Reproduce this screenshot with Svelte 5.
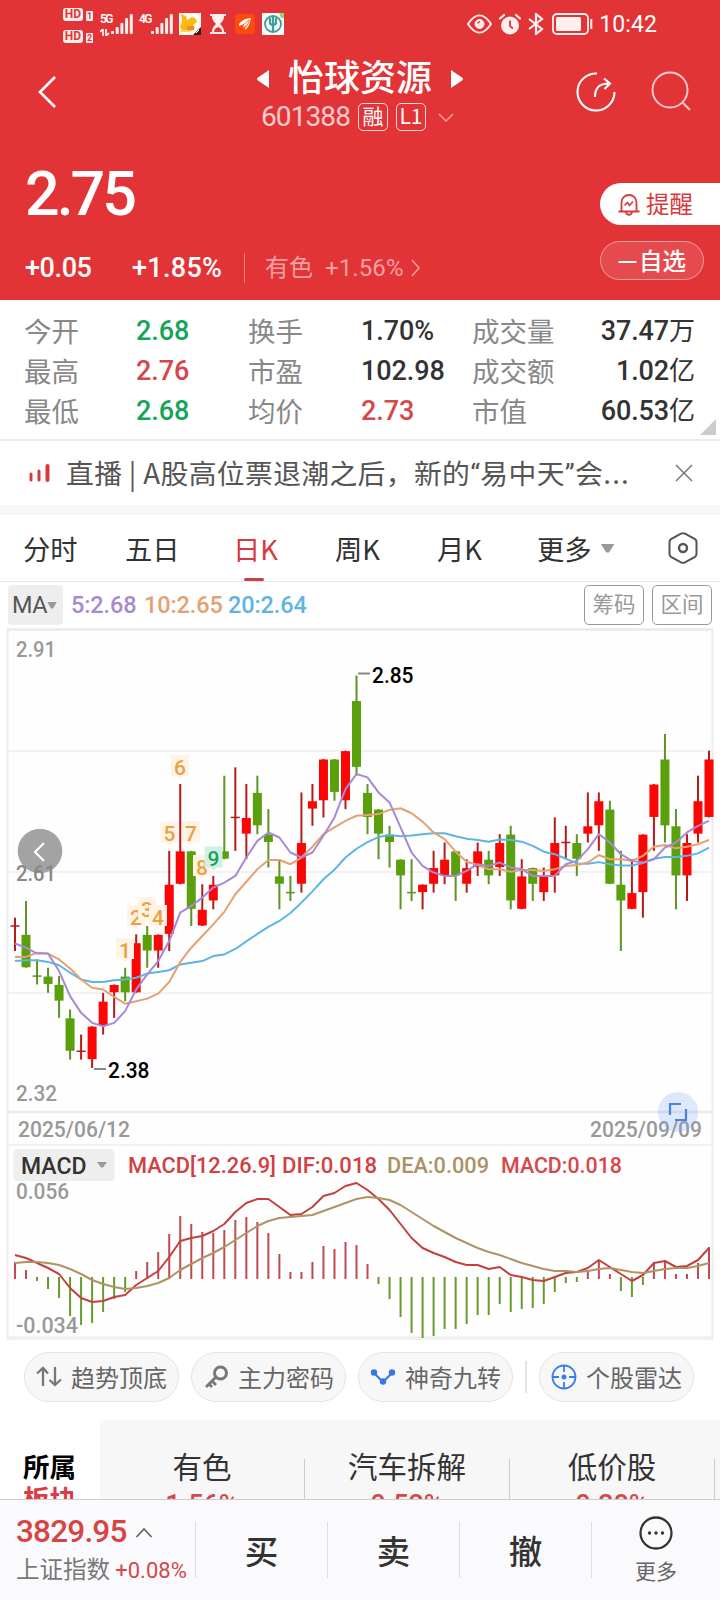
<script lang="ts">
	type Candle = [dir: 'u' | 'd', top: number, bottom: number, high: number, low: number];

	const statusBars = [3, 7, 11, 16, 20];

	const stats = [
		['今开', '2.68', 'down', '换手', '1.70%', '', '成交量', '37.47', '万'],
		['最高', '2.76', 'up', '市盈', '102.98', '', '成交额', '1.02', '亿'],
		['最低', '2.68', 'down', '均价', '2.73', 'up', '市值', '60.53', '亿'],
	];

	const tabs = ['分时', '五日', '日K', '周K', '月K'];
	let activeTab = $state('日K');

	// prices in cents
	const candles: Candle[] = [
		['u', 255, 255, 256, 252],
		['d', 254, 250, 258, 250],
		['d', 249, 249, 251, 248],
		['d', 249, 248, 250, 247],
		['d', 248, 246, 249, 244],
		['d', 244, 240, 245, 239],
		['u', 240, 240, 242, 239],
		['u', 243, 239, 243, 238],
		['u', 246, 243, 247, 242],
		['u', 248, 247, 248, 244],
		['d', 249, 247, 250, 246],
		['u', 253, 247, 254, 247],
		['d', 254, 252, 255, 250],
		['u', 254, 252, 254, 250],
		['u', 260, 254, 264, 252],
		['u', 264, 260, 272, 260],
		['d', 264, 257, 264, 255],
		['u', 257, 255, 260, 255],
		['u', 260, 258, 261, 257],
		['d', 264, 263, 273, 263],
		['u', 268, 268, 274, 264],
		['u', 268, 266, 272, 263],
		['d', 271, 267, 273, 266],
		['d', 266, 265, 269, 262],
		['d', 261, 260, 263, 257],
		['d', 259, 259, 261, 258],
		['u', 265, 260, 271, 259],
		['u', 270, 269, 272, 267],
		['u', 275, 270, 275, 268],
		['d', 275, 271, 275, 270],
		['u', 276, 270, 276, 269],
		['d', 282, 274, 285, 273],
		['d', 271, 268, 272, 266],
		['d', 269, 266, 269, 263],
		['d', 266, 265, 267, 262],
		['d', 263, 261, 263, 257],
		['d', 259, 259, 263, 258],
		['u', 260, 259, 260, 257],
		['u', 262, 260, 264, 259],
		['u', 263, 261, 265, 260],
		['d', 264, 261, 264, 258],
		['u', 262, 260, 263, 259],
		['u', 264, 262, 265, 261],
		['d', 263, 261, 264, 260],
		['u', 265, 262, 266, 261],
		['d', 266, 258, 267, 257],
		['u', 261, 257, 263, 257],
		['d', 262, 260, 262, 258],
		['u', 261, 259, 262, 258],
		['u', 265, 261, 268, 259],
		['u', 265, 265, 267, 263],
		['d', 265, 263, 266, 261],
		['u', 267, 266, 271, 265],
		['u', 270, 267, 271, 264],
		['d', 269, 260, 270, 260],
		['d', 260, 258, 264, 252],
		['u', 259, 257, 263, 257],
		['u', 266, 259, 266, 256],
		['u', 272, 268, 272, 264],
		['d', 275, 267, 278, 265],
		['d', 267, 261, 269, 257],
		['u', 265, 261, 266, 258],
		['u', 270, 266, 273, 265],
		['u', 275, 268, 276, 268],
	];

	// averages for the first days, before the window is full
	const seed5 = [252.9, 252.4, 251.7, 251.7];
	const seed10 = [251.3, 251.3, 251.8, 251.7, 251, 249.9, 248.6, 247.6, 247.4];
	const seed20 = [
		250.8, 250.9, 250.9, 250.7, 250.3, 249.4, 248.6, 248.3, 248.3, 248.5, 248.6, 248.8, 249.3,
		249.5, 249.7, 250.4, 250.6, 250.8, 251.4,
	];

	const macd = [
		16, 8, -3, -11, -20, -38, -47, -45, -34, -21, -14, 7, 16, 26, 44, 62, 54, 46, 45, 48, 58, 61,
		56, 45, 24, 6, 6, 16, 32, 29, 36, 33, 14, -6, -21, -39, -55, -60, -58, -51, -51, -46, -37, -37,
		-26, -34, -31, -30, -26, -14, -5, -4, 8, 18, 4, -13, -19, -7, 16, 18, 4, 4, 15, 31,
	];
	const dif = [
		23, 20, 15, 10, 4, -10, -20, -24, -23, -19, -17, -7, 0, 7, 21, 37, 40, 42, 47, 54, 66, 75, 79,
		79, 71, 63, 64, 71, 82, 85, 92, 95, 88, 79, 68, 54, 40, 30, 25, 21, 16, 13, 13, 9, 11, 3, 1, -2,
		-3, 1, 5, 6, 10, 18, 11, 4, -3, 3, 15, 17, 11, 12, 18, 30,
	];
	const dea = [
		15, 16, 16, 15, 13, 9, 4, -2, -6, -9, -11, -10, -8, -5, 0, 8, 14, 20, 25, 31, 38, 45, 52, 57,
		60, 61, 62, 63, 67, 71, 75, 79, 81, 80, 78, 73, 66, 59, 52, 46, 40, 35, 30, 26, 23, 19, 15, 12,
		9, 7, 7, 6, 7, 9, 10, 8, 6, 5, 7, 9, 10, 10, 12, 15,
	];

	const turns = [
		[125, 950],
		[136, 917],
		[147, 909],
		[158, 917],
		[169.5, 833.5],
		[180, 767],
		[191, 833],
		[202, 867],
		[213.5, 858.5],
	];

	const x = (i: number) => 15 + i * 11.016;
	const y = (p: number) => 675.5 + (285 - p) * 8.35;
	const zero = 1278;

	const closes = candles.map(([dir, top, bottom]) => (dir === 'u' ? top : bottom));

	function average(n: number, seed: number[]) {
		return closes.map((_, i) =>
			i < n - 1 ? seed[i] : closes.slice(i - n + 1, i + 1).reduce((a, b) => a + b, 0) / n,
		);
	}

	const pricePoints = (values: number[]) => values.map((v, i) => `${x(i)},${y(v)}`).join(' ');
	const macdPoints = (values: number[]) => values.map((v, i) => `${x(i)},${zero - v}`).join(' ');

	const sectors = [
		['有色', '1.56%'],
		['汽车拆解', '0.52%'],
		['低价股', '0.38%'],
	];
</script>

{#snippet signal()}
	<svg width="23" height="20" viewBox="0 0 23 20">
		{#each statusBars as h, i}
			<rect x={i * 4.7} y={20 - h} width="3" height={h} rx="1" fill="#fff" opacity=".92" />
		{/each}
	</svg>
{/snippet}

{#snippet label(text, lx, ly, size, width, fill)}
	<text
		x={lx}
		y={ly}
		{fill}
		font-size={size}
		textLength={width}
		lengthAdjust="spacingAndGlyphs">{text}</text
	>
{/snippet}

<main class="page">
	<header class="header">
		<div class="status">
			<div class="sims">
				<span class="sim"><b>HD</b><i>1</i></span>
				<span class="sim"><b>HD</b><i>2</i></span>
			</div>
			<div class="network">
				<span class="generation">5G</span>
				<svg class="transfer" width="10" height="7" viewBox="0 0 10 7">
					<path d="M0 3 3 0V7M6 0V7L9 4" fill="none" stroke="#fff" stroke-width="1.6" />
				</svg>
			</div>
			{@render signal()}
			<div class="network second"><span class="generation">4G</span></div>
			{@render signal()}
			<svg class="app-icon" width="22" height="22" viewBox="0 0 22 22">
				<rect width="22" height="22" fill="#fffdf0" />
				<path d="M2 1l5 2 1 4 5-3 4 2 1 3-4 3 2 3-4 3H3L1 14l2-6z" fill="#fdb913" />
				<path d="M8 13h7v4H8z" fill="#f58a1f" />
				<path d="M1 17h8l2 2H2z" fill="#ffd45c" />
				<path d="m14 22 8-8v8z" fill="#3a1712" />
				<path d="m17 20 3-3" stroke="#fff" />
			</svg>
			<svg class="hourglass" width="16" height="20" viewBox="0 0 16 20">
				<path d="M0 0h16v2h-2c0 4-2 6-4 8 2 2 4 4 4 8h2v2H0v-2h2c0-4 2-6 4-8C4 8 2 6 2 2H0z" fill="#fff0f0" />
				<path d="M4 18c0-3 2-4 4-5 2 1 4 2 4 5z" fill="#e23437" />
			</svg>
			<svg class="orange" width="20" height="20" viewBox="0 0 20 20">
				<rect width="20" height="20" rx="4" fill="#ff4a0a" />
				<path d="M4 10C7 6 11 4 16 4c-1 5-2 9-6 12l1-5-3 3 1-4-5 2z" fill="#fff" />
				<path d="m8 11 6-5M11 13l4-7" stroke="#ff4a0a" stroke-width=".8" />
			</svg>
			<svg class="bank" width="22" height="22" viewBox="0 0 22 22">
				<rect width="22" height="22" fill="#f4fbfa" />
				<circle cx="11" cy="11" r="8" fill="none" stroke="#3f9d9a" stroke-width="1.8" />
				<path d="M8 5v5.500q3 3 6 0V5M11 4v15" fill="none" stroke="#3f9d9a" stroke-width="2.2" />
				<path d="M17 0h5v5h-3z" fill="#9bd36a" />
			</svg>
			<div class="status-right">
				<svg width="25" height="20" viewBox="0 0 26 20" fill="none" stroke="#fff0f0">
					<path d="M1 10c4-6 8-9 12-9s8 3 12 9c-4 6-8 9-12 9S5 16 1 10z" stroke-width="2" />
					<circle cx="13" cy="10" r="4.6" fill="#fff0f0" />
					<path d="M11 9.5 13.4 7" stroke="#e23437" stroke-width="1.4" />
				</svg>
				<svg width="22" height="22" viewBox="0 0 22 22">
					<circle cx="11" cy="12.5" r="9" fill="#fff0f0" />
					<path d="M1 5.5 5 2M21 5.5 17 2" stroke="#fff0f0" stroke-width="2.2" stroke-linecap="round" />
					<path d="M11 7.5V13l3 2.6" fill="none" stroke="#e23437" stroke-width="1.8" />
				</svg>
				<svg width="18" height="22" viewBox="0 0 18 22">
					<path d="M2 6l13 10-6 5V1l6 5L2 16" fill="none" stroke="#fff0f0" stroke-width="2.2" />
				</svg>
				<svg width="41" height="22" viewBox="0 0 41 22">
					<rect x="1" y="1" width="35" height="20" rx="4" fill="none" stroke="#fff0f0" stroke-width="1.8" />
					<rect x="4" y="4" width="25" height="14" rx="1.5" fill="#fff0f0" />
					<path d="M39.3 6v10" stroke="#fff0f0" stroke-width="2" />
				</svg>
				<span class="clock">10:42</span>
			</div>
		</div>

		<div class="titlebar">
			<svg class="back" width="22" height="34" viewBox="0 0 22 34">
				<path d="M19 2 4 17l15 15" fill="none" stroke="#fff" stroke-width="2.6" />
			</svg>
			<div class="title">
				<h1>
					<svg width="12" height="18" viewBox="0 0 12 18">
						<path d="M12 0v18L1 10.5q-2-1.500 0-3z" fill="#fff" />
					</svg>
					<span>怡球资源</span>
					<svg width="12" height="18" viewBox="0 0 12 18">
						<path d="M0 0v18l11-7.500q2-1.500 0-3z" fill="#fff" />
					</svg>
				</h1>
				<div class="code">
					<span class="code-number">601388</span>
					<span class="tag">融</span>
					<span class="tag">L1</span>
					<svg width="16" height="9" viewBox="0 0 16 9">
						<path d="m1 1 7 7 7-7" fill="none" stroke="#f0a0a1" stroke-width="1.5" />
					</svg>
				</div>
			</div>
			<div class="tools">
				<svg width="42" height="42" viewBox="0 0 42 42" fill="none" stroke="#fff" stroke-width="2.1">
					<path d="M22 2.500A18.500 18.500 0 1 0 39.500 21" />
					<path d="M20 26c0-9 4-13.500 14-13.500M29 7.500l6 5-5.500 5.500" />
				</svg>
				<svg width="42" height="42" viewBox="0 0 42 42" fill="none" stroke="#f8cccd" stroke-width="1.9">
					<circle cx="20" cy="19" r="17.500" />
					<path d="m33 32 7 7" />
				</svg>
			</div>
		</div>

		<div class="quote">
			<div class="quote-main">
				<div class="price">2.75</div>
				<div class="change">
					<span class="amount">+0.05</span>
					<span class="percent">+1.85%</span>
					<span class="sector">有色</span>
					<span class="sector-change">+1.56%</span>
					<svg width="10" height="18" viewBox="0 0 10 18">
						<path d="m1 1 7 8-7 8" fill="none" stroke="#f1a0a2" stroke-width="1.5" />
					</svg>
				</div>
			</div>
			<div class="actions">
				<button class="remind">
					<svg width="22" height="23" viewBox="0 0 22 23" fill="none" stroke="#d8393c" stroke-width="1.8">
						<path d="M3.500 18V9.500a7.500 7.500 0 0 1 15 0V18M.5 18.500h21M8 19.500c1 3 5 3 6 0" />
						<path d="m6.500 12.500 3-3 2 3 3.500-4" stroke-width="1.500" />
					</svg>
					<span>提醒</span>
				</button>
				<button class="watch"><span class="minus">一</span>自选</button>
			</div>
		</div>
	</header>

	<section class="stats">
		{#each stats as [a, av, at, b, bv, bt, c, cv, unit]}
			<span class="name">{a}</span>
			<span class={['value', at]}>{av}</span>
			<span class="name">{b}</span>
			<span class={['value', bt]}>{bv}</span>
			<span class="name">{c}</span>
			<span class="value end">{cv}<em>{unit}</em></span>
		{/each}
		<span class="corner"></span>
	</section>

	<section class="news">
		<svg width="21" height="18" viewBox="0 0 21 18" stroke="#d8393c" stroke-linecap="round">
			<path d="M2 10v6" stroke-width="3" />
			<path d="M10 7v9" stroke-width="3" />
			<path d="M18.500 2v14" stroke-width="4" />
		</svg>
		<p>直播 | A股高位票退潮之后，新的<q>易中天</q>会<span class="dots">...</span></p>
		<svg width="18" height="18" viewBox="0 0 18 18">
			<path d="m1 1 16 16M17 1 1 17" stroke="#777" stroke-width="1.500" />
		</svg>
	</section>

	<nav class="tabs">
		{#each tabs as tab}
			<button class={['tab', { active: tab === activeTab }]} onclick={() => (activeTab = tab)}>
				{tab}
			</button>
		{/each}
		<button class="tab more">更多<i class="caret"></i></button>
		<svg class="settings" width="30" height="32" viewBox="0 0 30 32" fill="none" stroke="#555" stroke-width="2">
			<path d="M13 1.700q2-1 4 0l10 5.500q1.500 1 1.500 3v11.600q0 2-1.500 3l-10 5.500q-2 1-4 0l-10-5.500q-1.500-1-1.500-3V10.200q0-2 1.500-3z" />
			<circle cx="15" cy="16" r="4" stroke-width="2.400" />
		</svg>
	</nav>

	<div class="indicator">
		<button class="ma">MA<i class="caret small"></i></button>
		<span class="ma5">5:2.68</span>
		<span class="ma10">10:2.65</span>
		<span class="ma20">20:2.64</span>
		<button class="outlined">筹码</button>
		<button class="outlined">区间</button>
	</div>

	<svg class="chart" width="720" height="712" viewBox="0 628 720 712">
		<rect x="7.500" y="629.500" width="705" height="708" fill="#fefefe" stroke="#ebebeb" stroke-width="2" />
		<path d="M7 629.500h706M7 1112h706" stroke="#ebebeb" stroke-width="2.500" />
		<path d="M8 751h705M8 872h705M8 993h705M8 1145h705" stroke="#f2f2f2" stroke-width="2" />
		<path d="M7 1339.500h707" stroke="#eee" />

		<circle cx="40" cy="851" r="22.300" fill="#a3a3a3" />
		<path d="m44 843-9 9 9 9" fill="none" stroke="#fff" stroke-width="2.200" />

		{@render label('2.91', 16, 657, 22, 40, '#999')}
		{@render label('2.61', 16, 881, 22, 40, '#888')}
		{@render label('2.32', 16, 1101, 22, 41, '#999')}

		{#each candles as [dir, top, bottom, high, low], i}
			<g class={dir}>
				<path class="wick" d="M{x(i)} {y(high)}V{y(low)}" />
				{#if top === bottom}
					<path class="flat" d="M{x(i) - 4.500} {y(top)}h9" />
				{:else}
					<rect x={x(i) - 4.500} y={y(top) + 0.500} width="9" height={y(bottom) - y(top) - 1} />
				{/if}
			</g>
		{/each}

		{#each turns as [tx, ty], i}
			<g class={['turn', { last: i === 8 }]}>
				<path d="M{tx - 9} {ty - 12}h18v21h-6l-3 3-3-3h-6z" />
				<text x={tx} y={ty + 7.500}>{i + 1}</text>
			</g>
		{/each}

		<g class="lines">
			<polyline points={pricePoints(average(20, seed20))} stroke="#5eb5e0" />
			<polyline points={pricePoints(average(10, seed10))} stroke="#e5a171" />
			<polyline points={pricePoints(average(5, seed5))} stroke="#a78ad2" />
		</g>

		<path d="M358 673.500h12M94 1069h12" stroke="#888" stroke-width="2" />
		{@render label('2.85', 372, 682.500, 22, 41.500, '#000')}
		{@render label('2.38', 108, 1077.500, 22, 41.500, '#000')}

		{@render label('2025/06/12', 18, 1136.500, 22, 112, '#999')}
		{@render label('2025/09/09', 590, 1136.500, 22, 112, '#999')}
		<circle cx="678" cy="1112" r="20" fill="#6a9bf5" opacity=".22" />
		<path d="M670 1115v-11h11M675 1120h11v-11" fill="none" stroke="#4a83dc" stroke-width="2.200" />

		<rect x="13.500" y="1149" width="101" height="32" rx="4" fill="#eee" />
		{@render label('MACD', 21, 1173.500, 23, 65.500, '#333')}
		<path d="M97 1162h10l-4 5.500h-2z" fill="#999" />
		{@render label('MACD[12.26.9]', 128, 1173, 22, 148, '#cf4144')}
		{@render label('DIF:0.018', 282, 1173, 22, 95, '#cf4144')}
		{@render label('DEA:0.009', 387, 1173, 22, 102, '#ab9164')}
		{@render label('MACD:0.018', 501, 1173, 22, 121, '#d8474b')}
		{@render label('0.056', 16, 1199, 22, 53, '#999')}

		{#each macd as value, i}
			<path
				d="M{x(i)} {value > 0 ? zero + 1 : zero - 1}V{zero - value}"
				stroke={value > 0 ? '#bf4a50' : '#679a2c'}
				stroke-width="2"
			/>
		{/each}
		<g class="lines">
			<polyline points={macdPoints(dif)} stroke="#c2413f" />
			<polyline points={macdPoints(dea)} stroke="#b09365" />
		</g>
		{@render label('-0.034', 16, 1333, 22, 62, '#999')}
	</svg>

	<section class="shortcuts">
		<button>
			<svg width="26" height="22" viewBox="0 0 26 22" fill="none" stroke="#777" stroke-width="2.3">
				<path d="M7 20V2M1 7.500 7 2l5 5.500M19 1v18M13.500 14l5.500 5 6-5.500" />
			</svg>
			<span>趋势顶底</span>
		</button>
		<button>
			<svg width="26" height="24" viewBox="0 0 26 24" fill="none" stroke="#777">
				<circle cx="17.500" cy="8" r="6" stroke-width="3" />
				<path d="M13 12 3 22M9 16l4 4M5.500 18.500l3.500 3.500" stroke-width="2.800" />
			</svg>
			<span>主力密码</span>
		</button>
		<button>
			<svg width="26" height="20" viewBox="0 0 26 20" fill="#3478e8">
				<path d="m4 6 9 9 9-9" fill="none" stroke="#3478e8" stroke-width="2" />
				<circle cx="4" cy="5.500" r="3.200" />
				<circle cx="22" cy="5.500" r="3.200" />
				<circle cx="13" cy="14.500" r="3.200" />
			</svg>
			<span>神奇九转</span>
		</button>
		<i class="divider"></i>
		<button>
			<svg width="26" height="26" viewBox="0 0 26 26" fill="none" stroke="#3b7de8" stroke-width="1.800">
				<circle cx="13" cy="13" r="11.500" />
				<path d="M13 2v6M13 18v6M2 13h6M18 13h6" />
				<circle cx="13" cy="13" r="1.600" fill="#3b7de8" />
			</svg>
			<span>个股雷达</span>
		</button>
	</section>

	<section class="sectors">
		<div class="sectors-title"><b>所属</b><b class="second">板块</b></div>
		<div class="sector-list">
			{#each sectors as [name, change]}
				<div class="sector-cell">
					<span>{name}</span>
					<span class="sector-percent">{change}</span>
				</div>
			{/each}
		</div>
	</section>

	<footer class="bottom">
		<div class="index">
			<div class="index-value">
				3829.95
				<svg width="18" height="11" viewBox="0 0 18 11">
					<path d="m1.500 10 7.500-8 7.500 8" fill="none" stroke="#666" stroke-width="1.800" />
				</svg>
			</div>
			<div class="index-name">上证指数 <span>+0.08%</span></div>
		</div>
		<button class="trade">买</button>
		<button class="trade">卖</button>
		<button class="trade">撤</button>
		<button class="others">
			<svg width="36" height="36" viewBox="0 0 36 36" fill="#333">
				<circle cx="18" cy="18" r="15.500" fill="none" stroke="#333" stroke-width="2.300" />
				<circle cx="11.500" cy="18" r="1.700" />
				<circle cx="18" cy="18" r="1.700" />
				<circle cx="24.500" cy="18" r="1.700" />
			</svg>
			更多
		</button>
	</footer>
</main>

<style>
	:global(body) {
		background: #fff;
	}

	.page {
		--red: #d5474a;
		--digits: Roboto, 'Noto Sans CJK SC', sans-serif;
		display: flex;
		flex-direction: column;
		width: 720px;
		height: 1600px;
		overflow: hidden;
		background: #fff;
		color: #333;
		font-family: 'Noto Sans CJK SC', sans-serif;
		white-space: nowrap;
	}

	svg {
		display: block;
		flex: none;
	}

	button {
		margin: 0;
		padding: 0;
		border: 0;
		background: none;
		color: inherit;
		font: inherit;
	}

	/* Header */
	.header {
		height: 300px;
		background: #e23437;
		color: #fff;
	}

	.status {
		display: flex;
		align-items: center;
		height: 48px;
		padding: 0 63px;
		font-family: var(--digits);
	}

	.sims {
		display: flex;
		flex-direction: column;
		gap: 9px;
		margin: 2px 7px 0 0;
	}

	.sim {
		display: flex;
		align-items: flex-end;
		gap: 3px;
		height: 13px;
		width: 30px;
	}

	.sim b,
	.sim i {
		border-radius: 3px;
		background: #fff0f0;
		color: #e23437;
		font: 700 12px/13px var(--digits);
		text-align: center;
	}

	.sim b {
		width: 20px;
	}

	.sim i {
		width: 7px;
		border-radius: 1px;
		font-size: 9px;
		line-height: 10px;
	}

	.network {
		width: 11px;
		height: 22px;
	}

	.network.second {
		width: 12px;
		margin-left: 5px;
	}

	.generation {
		display: block;
		font-size: 12px;
		font-weight: 600;
		line-height: 12px;
		letter-spacing: -1.5px;
	}

	.transfer {
		margin-top: 4px;
	}

	.app-icon {
		margin-left: 5px;
	}

	.hourglass,
	.orange {
		margin-left: 9px;
	}

	.bank {
		margin-left: 7px;
	}

	.status-right {
		display: flex;
		align-items: center;
		gap: 6.5px;
		margin-left: auto;
	}

	.clock {
		margin-top: 2px;
		font-size: 23px;
		line-height: 48px;
		letter-spacing: 0.1px;
	}

	.titlebar {
		display: grid;
		grid-template-columns: 180px 360px 180px;
		height: 92px;
	}

	.back {
		margin: 27px 0 0 36px;
	}

	.title {
		display: flex;
		flex-direction: column;
		align-items: center;
	}

	h1 {
		display: flex;
		align-items: center;
		gap: 19px;
		height: 42px;
		margin: 6px 0 7px;
		font-size: 36px;
		font-weight: 500;
		line-height: 42px;
	}

	h1 svg {
		margin-top: 8px;
	}

	.code {
		display: flex;
		align-items: center;
		gap: 8px;
		margin-right: 5px;
	}

	.code-number {
		width: 89px;
		color: #f9cccd;
		font: 400 28px/28px var(--digits);
		letter-spacing: -0.9px;
	}

	.tag {
		box-sizing: border-box;
		width: 30px;
		height: 28px;
		border: 1.5px solid #fbdcdd;
		border-radius: 5px;
		font-size: 21px;
		line-height: 23px;
		text-align: center;
	}

	.code svg {
		margin-left: 4px;
	}

	.tools {
		display: flex;
		gap: 33px;
		padding: 23px 0 0 35px;
	}

	.quote {
		display: flex;
		justify-content: space-between;
	}

	.quote-main {
		padding: 24px 0 0 25px;
	}

	.price {
		font: 500 61px/60px var(--digits);
		letter-spacing: -3px;
	}

	.change {
		display: flex;
		align-items: center;
		height: 30px;
		margin-top: 28px;
		font: 500 27px/30px var(--digits);
		letter-spacing: -0.4px;
	}

	.change > * {
		position: relative;
		top: 1px;
	}

	.amount {
		width: 107px;
	}

	.percent {
		width: 112px;
		border-right: 1px solid #ee8385;
		letter-spacing: 0.3px;
	}

	.sector,
	.sector-change {
		color: #f1a0a2;
		font-weight: 400;
	}

	.sector {
		width: 60px;
		padding-left: 20px;
		font-size: 24px;
		letter-spacing: 0;
	}

	.sector-change {
		width: 86px;
		font-size: 24px;
		letter-spacing: 0.1px;
	}

	.actions {
		display: flex;
		flex-direction: column;
		align-items: flex-end;
		gap: 17px;
		padding-top: 43px;
	}

	.remind {
		display: flex;
		align-items: center;
		gap: 6px;
		width: 120px;
		height: 42px;
		padding-left: 18px;
		box-sizing: border-box;
		border-radius: 21px 0 0 21px;
		background: #fff;
		color: #d8393c;
		font-size: 23.5px;
		line-height: 36px;
	}

	.remind span {
		margin-bottom: 2px;
	}

	.watch {
		width: 104px;
		height: 39px;
		margin: -1px 16px 0 0;
		border: 1px solid #f0a0a1;
		border-radius: 20px;
		background: #e54b4e;
		font-size: 23.5px;
		font-weight: 500;
		line-height: 36px;
	}

	.minus {
		display: inline-block;
		margin-right: 2px;
		font-size: 19px;
	}

	/* Stats */
	.stats {
		position: relative;
		display: grid;
		grid-template-columns: 112px 112px 113px 111px 94px 1fr;
		grid-auto-rows: 40px;
		align-items: center;
		box-sizing: border-box;
		height: 141px;
		padding: 10px 25px 0 24px;
		border-bottom: 2px solid #ededed;
		line-height: 40px;
	}

	.name {
		color: #888;
		font-size: 27.5px;
	}

	.value {
		padding-top: 2px;
		font-family: var(--digits);
		font-size: 27px;
		font-weight: 500;
		letter-spacing: -0.1px;
		line-height: 38px;
	}

	.value.down {
		color: #14a45c;
	}

	.value.up {
		color: var(--red);
	}

	.value.end {
		text-align: right;
	}

	.value em {
		font-size: 26px;
		font-style: normal;
		font-weight: 400;
	}

	.corner {
		position: absolute;
		right: 4px;
		bottom: 4px;
		width: 16px;
		height: 16px;
		background: #ccc;
		clip-path: polygon(100% 0, 100% 100%, 0 100%);
	}

	/* News */
	.news {
		display: flex;
		align-items: center;
		height: 64px;
		padding: 0 27px 0 29px;
		border-bottom: 10px solid #f7f7f7;
		color: #555;
	}

	.news p {
		flex: 1;
		margin: 0 0 0 16px;
		font-size: 27.8px;
		line-height: 64px;
		letter-spacing: 0.35px;
	}

	.news q {
		quotes: '“' '”';
	}

	.news q::before,
	.news q::after {
		font-family: Roboto, sans-serif;
	}

	.dots {
		letter-spacing: 1.2px;
	}

	/* Tabs */
	.tabs {
		display: flex;
		align-items: center;
		box-sizing: border-box;
		height: 67px;
		padding: 0 22px 0 23px;
		border-bottom: 1px solid #e6e6e6;
	}

	.tab {
		position: relative;
		width: 102px;
		font-size: 27.3px;
		line-height: 66px;
		text-align: left;
	}

	.tab.active {
		color: #d8393c;
	}

	.tab:nth-child(3) {
		margin-left: 7px;
	}

	.tab:nth-child(2) {
		width: 101px;
	}

	.tab:nth-child(5) {
		width: 100px;
	}

	.tab.active::after {
		position: absolute;
		bottom: 0;
		left: 11px;
		width: 20px;
		height: 3px;
		border-radius: 2px;
		background: #c94047;
		content: '';
	}

	.more {
		display: flex;
		align-items: center;
		gap: 9px;
	}

	.caret {
		width: 14px;
		height: 9px;
		background: #999;
		clip-path: polygon(0 0, 100% 0, 60% 100%, 40% 100%);
	}

	.caret.small {
		width: 10px;
		height: 7px;
	}

	.settings {
		margin-left: auto;
	}

	/* Indicator row */
	.indicator {
		display: flex;
		align-items: center;
		height: 46px;
		padding: 0 8px;
		font: 500 23.5px/42px var(--digits);
		letter-spacing: -0.1px;
	}

	.ma {
		display: flex;
		align-items: center;
		width: 55px;
		height: 40px;
		padding-left: 4px;
		box-sizing: border-box;
		border-radius: 4px;
		background: #eee;
		color: #555;
		font-weight: 400;
		letter-spacing: -0.5px;
	}

	.ma5 {
		width: 73px;
		margin-left: 8px;
		color: #a78ad2;
	}

	.ma10 {
		width: 84px;
		color: #e5a171;
	}

	.ma20 {
		margin-right: auto;
		color: #5eb5e0;
	}

	.outlined {
		box-sizing: border-box;
		width: 60px;
		height: 40px;
		margin-left: 8px;
		border: 1.5px solid #999;
		border-radius: 5px;
		color: #999;
		font-size: 21.5px;
		font-weight: 400;
		line-height: 38px;
		letter-spacing: 0;
	}

	/* Chart */
	.chart {
		font-family: var(--digits);
		font-weight: 500;
	}

	.wick {
		stroke-width: 2;
	}

	.flat {
		stroke-width: 1.5;
	}

	.u {
		fill: #fb0505;
		stroke: #b81a1a;
	}

	.d {
		fill: #5a9f0c;
		stroke: #5d9422;
	}

	.u rect,
	.d rect {
		stroke: none;
	}

	.turn {
		fill: #e9a23f;
		font-size: 21px;
		text-anchor: middle;
	}

	.turn path {
		fill: #fef3e6;
	}

	.turn.last {
		fill: #14a45c;
	}

	.turn.last path {
		fill: #d2efe1;
	}

	.lines {
		fill: none;
		stroke-width: 2;
		stroke-linejoin: round;
	}

	/* Shortcuts */
	.shortcuts {
		display: flex;
		align-items: center;
		gap: 12px;
		height: 50px;
		padding: 12px 24px 18px;
	}

	.shortcuts button {
		display: flex;
		align-items: center;
		justify-content: center;
		gap: 9px;
		box-sizing: border-box;
		width: 155px;
		height: 50px;
		border: 1px solid #e4e4e4;
		border-radius: 25px;
		background: #f7f7f7;
		color: #666;
		font-size: 24px;
	}

	.shortcuts span {
		margin-bottom: 2px;
	}

	.divider {
		width: 2px;
		height: 32px;
		background: #e4e4e4;
	}

	/* Sectors */
	.sectors {
		display: flex;
		height: 79px;
		overflow: hidden;
	}

	.sectors-title {
		display: flex;
		flex-direction: column;
		width: 77px;
		padding: 30px 0 0 23px;
		color: #000;
		font-size: 26.5px;
		line-height: 32px;
	}

	.sectors-title .second {
		color: #dd3b44;
	}

	.sector-list {
		display: flex;
		flex: 1;
		height: 120px;
		border-radius: 8px 0 0;
		background: #f7f7f7;
	}

	.sector-cell {
		display: flex;
		flex: none;
		flex-direction: column;
		align-items: center;
		width: 204px;
		height: 80px;
		margin-top: 39px;
		border-right: 1px solid #ccc;
		font-size: 29.5px;
		line-height: 12px;
	}

	.sector-percent {
		margin-top: 24px;
		color: var(--red);
		font: 500 27px/20px var(--digits);
	}

	/* Bottom bar */
	.bottom {
		display: flex;
		align-items: center;
		box-sizing: border-box;
		height: 101px;
		border-top: 1px solid #ccc;
		background: #fafafc;
	}

	.index {
		width: 179px;
		height: 100px;
		padding-left: 16px;
	}

	.index-value {
		display: flex;
		align-items: center;
		gap: 8px;
		height: 30px;
		margin: 17px 0 6px;
		color: #d84343;
		font: 500 31.5px/30px var(--digits);
		letter-spacing: -0.8px;
	}

	.index-name {
		color: #777;
		font-size: 23.5px;
		line-height: 30px;
	}

	.index-name span {
		color: var(--red);
		font: 400 22px/30px var(--digits);
	}

	.trade {
		box-sizing: border-box;
		width: 132px;
		height: 56px;
		border-left: 1px solid #ddd;
		font-size: 33.5px;
		font-weight: 500;
		line-height: 56px;
	}

	.others {
		display: flex;
		flex: 1;
		flex-direction: column;
		align-items: center;
		height: 56px;
		border-left: 1px solid #ddd;
		color: #666;
		font-size: 21px;
		line-height: 38px;
	}

	.others svg {
		margin-top: -7px;
	}
</style>
